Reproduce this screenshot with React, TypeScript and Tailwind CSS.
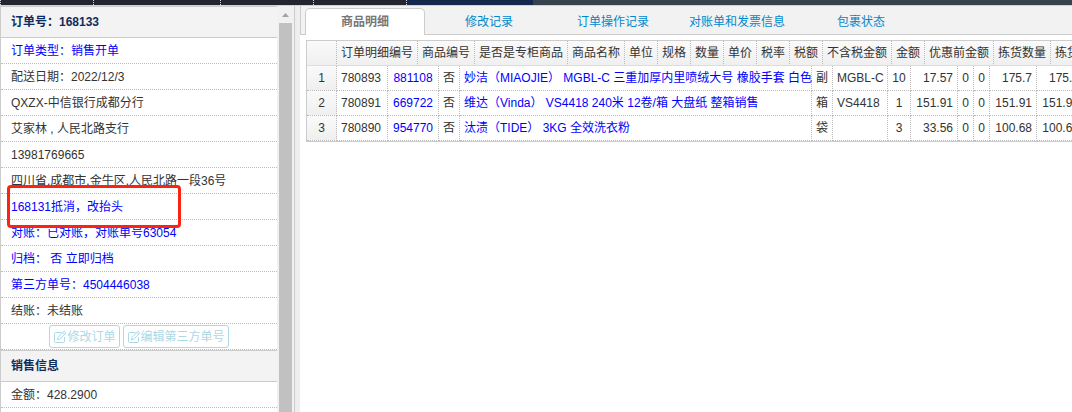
import clsx from "clsx";
import { ReactNode, useState } from "react";

type Align = "left" | "center" | "right";

type Column = {
  width: string;
  align: Align;
  link?: boolean;
};

const tabs = ["商品明细", "修改记录", "订单操作记录", "对账单和发票信息", "包裹状态"];

const headers = [
  { title: "", width: "w-[30px]" },
  { title: "订单明细编号", width: "w-[81px]" },
  { title: "商品编号", width: "w-[57px]" },
  { title: "是否是专柜商品", width: "w-[93px]" },
  { title: "商品名称", width: "w-[57px]" },
  { title: "单位", width: "w-[33px]" },
  { title: "规格", width: "w-[33px]" },
  { title: "数量", width: "w-[33px]" },
  { title: "单价", width: "w-[33px]" },
  { title: "税率", width: "w-[33px]" },
  { title: "税额", width: "w-[33px]" },
  { title: "不含税金额", width: "w-[69px]" },
  { title: "金额", width: "w-[33px]" },
  { title: "优惠前金额", width: "w-[69px]" },
  { title: "拣货数量", width: "w-[57px]" },
  { title: "拣货金额", width: "w-[57px]" },
];

const columns: Column[] = [
  { width: "w-[30px]", align: "center" },
  { width: "w-[51px]", align: "left" },
  { width: "w-[51px]", align: "center", link: true },
  { width: "w-[21px]", align: "left" },
  { width: "w-[352px]", align: "left", link: true },
  { width: "w-[21px]", align: "left" },
  { width: "w-[55px]", align: "left" },
  { width: "w-[23px]", align: "center" },
  { width: "w-[47px]", align: "right" },
  { width: "w-[16px]", align: "center" },
  { width: "w-[16px]", align: "center" },
  { width: "w-[47px]", align: "right" },
  { width: "w-[47px]", align: "right" },
];

const rows = [
  ["1", "780893", "881108", "否", "妙洁（MIAOJIE） MGBL-C 三重加厚内里喷绒大号 橡胶手套 白色", "副", "MGBL-C", "10", "17.57", "0", "0", "175.7", "175.7"],
  ["2", "780891", "669722", "否", "维达（Vinda） VS4418 240米 12卷/箱 大盘纸 整箱销售", "箱", "VS4418", "1", "151.91", "0", "0", "151.91", "151.91"],
  ["3", "780890", "954770", "否", "汰渍（TIDE） 3KG 全效洗衣粉", "袋", "", "3", "33.56", "0", "0", "100.68", "100.68"],
];

const EditIcon = () => (
  <svg viewBox="0 0 14 14" className="size-3.5 shrink-0" fill="none" stroke="currentColor">
    <path d="M8.500 2.500H2.500a1 1 0 0 0-1 1v8a1 1 0 0 0 1 1h8a1 1 0 0 0 1-1V7" />
    <path d="M4.300 9.900l.8-2.700 5.900-6 1.900 1.800-5.900 6z" />
    <path d="M9.800 2.500l1.800 1.800" />
  </svg>
);

const TopBar = () => (
  <div className="flex h-[5px] shrink-0 bg-[#35434f]">
    <div className="w-[94px] border-x border-dotted border-gray-300 bg-[#22272f]" />
    <div className="w-[127px] border-r border-dotted border-gray-300 bg-[#22272f]" />
    <div className="w-[93px] border-r border-dotted border-gray-300 bg-[#22272f]" />
    <div className="w-[93px] border-r border-dotted border-gray-300 bg-[#22272f]" />
    <div className="w-[126px] bg-[#13284c]" />
  </div>
);

const SectionTitle = ({ children }: { children: ReactNode }) => (
  <h2 className="h-8 border-y border-[#ccc] bg-[#f3f3f3] px-2.5 leading-[30px] font-bold text-[#0e2d5f]">
    {children}
  </h2>
);

const InfoRow = ({ children, href }: { children: ReactNode; href?: string }) => (
  <div className="relative h-[26px] border-b border-dotted border-[#bbb] px-2.5 leading-[26px] whitespace-pre">
    {href ? (
      <a href={href} className="text-[#0000ff]">
        {children}
      </a>
    ) : (
      children
    )}
  </div>
);

const OutlineButton = ({ children }: { children: ReactNode }) => (
  <button
    type="button"
    className="flex h-[23px] items-center rounded-[3px] border border-[#add8e6] bg-white px-[3px] text-[#add8e6]"
  >
    <EditIcon />
    {children}
  </button>
);

const Sidebar = () => (
  <aside className="flex w-[295px] shrink-0 border-x border-[#ccc] bg-white">
    <div className="min-w-0 flex-1 overflow-hidden">
      <SectionTitle>订单号：168133</SectionTitle>
      <InfoRow href="#type">订单类型：销售开单</InfoRow>
      <InfoRow>配送日期：2022/12/3</InfoRow>
      <InfoRow>QXZX-中信银行成都分行</InfoRow>
      <InfoRow>艾家林 , 人民北路支行</InfoRow>
      <InfoRow>13981769665</InfoRow>
      <InfoRow>四川省,成都市,金牛区,人民北路一段36号</InfoRow>
      <InfoRow href="#remark">
        168131抵消，改抬头
        <span className="pointer-events-none absolute -top-[9px] left-1.5 z-10 h-[43px] w-[174px] rounded-[4px] border-3 border-[#fb2312]" />
      </InfoRow>
      <InfoRow href="#statement">对账：已对账，对账单号63054</InfoRow>
      <InfoRow href="#archive">归档： 否 立即归档</InfoRow>
      <InfoRow href="#third-party">第三方单号：4504446038</InfoRow>
      <InfoRow>结账：未结账</InfoRow>
      <div className="flex h-[26px] items-center justify-center gap-[3px] border-b border-dotted border-[#bbb]">
        <OutlineButton>修改订单</OutlineButton>
        <OutlineButton>编辑第三方单号</OutlineButton>
      </div>
      <SectionTitle>销售信息</SectionTitle>
      <InfoRow>金额：428.2900</InfoRow>
    </div>
    <div className="flex w-[17px] shrink-0 flex-col items-center bg-[#f1f1f1]">
      <svg viewBox="0 0 17 17" className="size-[17px] shrink-0" fill="#a3a3a3">
        <path d="M5 11h7L8.500 7z" />
      </svg>
      <div className="w-[13px] flex-1 bg-[#c1c1c1]" />
    </div>
  </aside>
);

const DetailGrid = () => (
  <div className="overflow-hidden border-y border-l border-[#ccc]">
    <table className="w-px table-fixed border-separate border-spacing-0">
      <thead>
        <tr className="bg-linear-to-b from-[#fafafa] to-[#efefef]">
          {headers.map(({ title, width }, i) => (
            <th
              key={i}
              className={clsx(
                "h-[25px] border-r border-b border-r-[#bbb] border-b-[#ddd] p-0 font-normal whitespace-nowrap [border-right-style:dotted]",
                width,
              )}
            >
              {title}
            </th>
          ))}
        </tr>
      </thead>
    </table>
    <table className="w-px table-fixed border-separate border-spacing-0">
      <tbody>
        {rows.map((row) => (
          <tr key={row[0]}>
            {row.map((value, i) => {
              const { width, align, link } = columns[i];
              return (
                <td
                  key={i}
                  className={clsx(
                    "h-[25px] border-r border-b border-dotted border-[#bbb] py-0 whitespace-nowrap",
                    width,
                    align === "left" && "px-1 text-left",
                    align === "center" && "px-0 text-center",
                    align === "right" && "px-1 text-right",
                    i === 0 && "bg-linear-to-b from-[#fafafa] to-[#efefef]",
                  )}
                >
                  {link ? (
                    <a href={`#${row[2]}`} className="text-[#0000ff]">
                      {value}
                    </a>
                  ) : (
                    value
                  )}
                </td>
              );
            })}
          </tr>
        ))}
      </tbody>
    </table>
  </div>
);

export default function App() {
  const [active, setActive] = useState(0);

  return (
    <div className="flex h-screen flex-col overflow-hidden bg-white font-['Liberation_Sans','Noto_Sans_CJK_SC',sans-serif] text-xs text-[#333]">
      <TopBar />
      <div className="flex min-h-0 flex-1 border-t border-[#d3d3d3] bg-[#eee]">
        <Sidebar />
        <main className="ml-[5px] min-w-0 flex-1 bg-white">
          <div
            role="tablist"
            className="flex h-[29px] items-end gap-1 border-b border-l border-[#ccc] bg-[#f2f2f2] pl-1"
          >
            {tabs.map((tab, i) => (
              <button
                key={tab}
                type="button"
                role="tab"
                aria-selected={i === active}
                onClick={() => setActive(i)}
                className={clsx(
                  "-mb-px h-[27px] w-[120px] shrink-0 rounded-t-[5px] border border-b-0",
                  i === active
                    ? "border-[#ccc] bg-white font-bold text-[#777]"
                    : "border-transparent text-[#0088cc]",
                )}
              >
                {tab}
              </button>
            ))}
          </div>
          <div className="pt-[5px] pl-1.5">
            <DetailGrid />
          </div>
        </main>
      </div>
    </div>
  );
}
